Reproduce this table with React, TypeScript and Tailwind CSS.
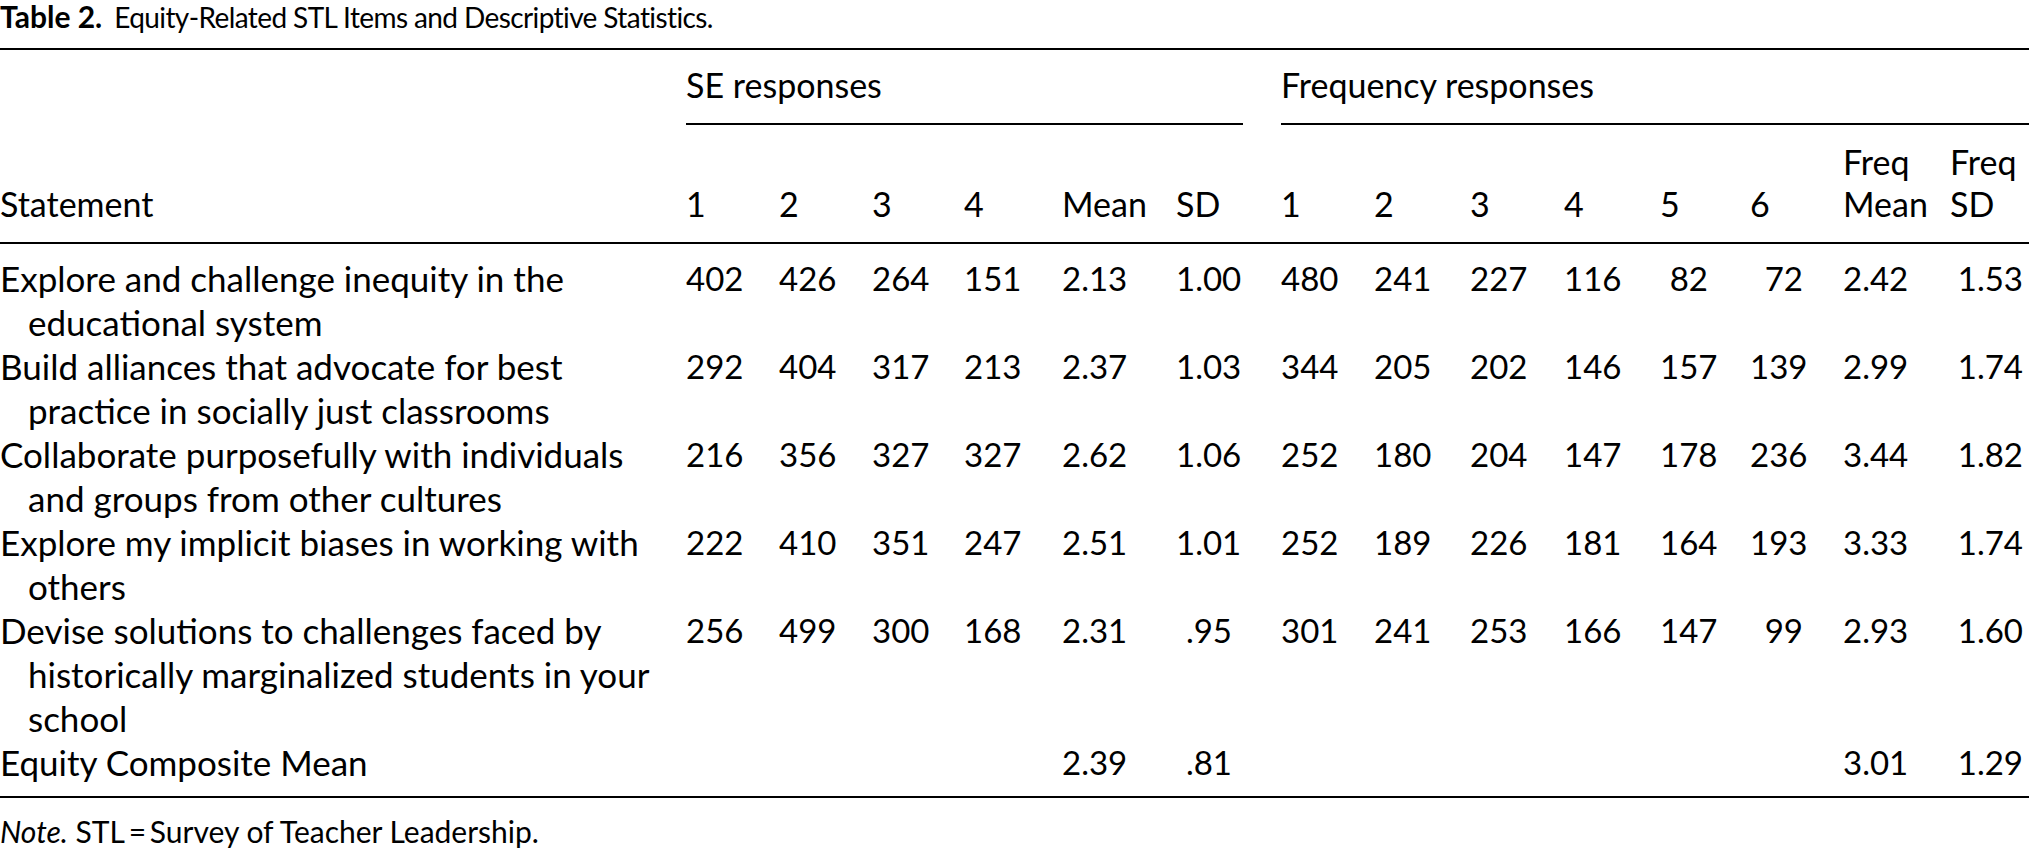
import React from "react";

// Table 2 — equity-related STL items, SE + frequency descriptive stats
type Row = {
  lines: string[];
  se: string[]; // 1..4, mean, sd
  fr: string[]; // 1..6, freq mean, freq sd
};

const ROWS: Row[] = [
  {
    lines: ["Explore and challenge inequity in the", "educational system"],
    se: ["402", "426", "264", "151", "2.13", "1.00"],
    fr: ["480", "241", "227", "116", "82", "72", "2.42", "1.53"],
  },
  {
    lines: ["Build alliances that advocate for best", "practice in socially just classrooms"],
    se: ["292", "404", "317", "213", "2.37", "1.03"],
    fr: ["344", "205", "202", "146", "157", "139", "2.99", "1.74"],
  },
  {
    lines: ["Collaborate purposefully with individuals", "and groups from other cultures"],
    se: ["216", "356", "327", "327", "2.62", "1.06"],
    fr: ["252", "180", "204", "147", "178", "236", "3.44", "1.82"],
  },
  {
    lines: ["Explore my implicit biases in working with", "others"],
    se: ["222", "410", "351", "247", "2.51", "1.01"],
    fr: ["252", "189", "226", "181", "164", "193", "3.33", "1.74"],
  },
  {
    lines: ["Devise solutions to challenges faced by", "historically marginalized students in your", "school"],
    se: ["256", "499", "300", "168", "2.31", ".95"],
    fr: ["301", "241", "253", "166", "147", "99", "2.93", "1.60"],
  },
  {
    lines: ["Equity Composite Mean"],
    se: ["", "", "", "", "2.39", ".81"],
    fr: ["", "", "", "", "", "", "3.01", "1.29"],
  },
];

// right padding per numeric column, so figures line up on the right edge
const PAD = [
  "pr-[38px]", "pr-[38px]", "pr-[37px]", "pr-[42px]", "pr-[54px]", "pr-[49px]",
  "pr-[38px]", "pr-[41px]", "pr-[39px]", "pr-[45px]", "pr-[42px]", "pr-[40px]", "pr-[47px]", "pr-[27px]",
];

const GRID =
  "grid grid-cols-[686px_93px_93px_92px_98px_114px_105px_93px_96px_94px_96px_90px_93px_107px_100px]";

export default function App() {
  return (
    <div
      className="w-[2029px] h-[851px] bg-white text-black overflow-hidden"
      style={{ fontFamily: "Lato, 'Liberation Sans', sans-serif" }}
    >
      {/* Caption */}
      <div className="h-[48px] pt-[1px] text-[28px] leading-[30px] whitespace-nowrap">
        <span className="font-bold text-[30px]">Table 2.</span>
        <span className="ml-[12px] tracking-[-0.6px]">Equity-Related STL Items and Descriptive Statistics.</span>
      </div>

      <div className="border-t-2 border-b-2 border-black text-[34px]">
        {/* Group headers */}
        <div className={`${GRID} leading-[44px]`}>
          <div />
          <div className="col-span-6 pt-[13px]">
            <div className="mr-[38px] pb-[16px] border-b-2 border-black">SE responses</div>
          </div>
          <div className="col-span-8 pt-[13px]">
            <div className="pb-[16px] border-b-2 border-black">Frequency responses</div>
          </div>
        </div>

        {/* Column headers */}
        <div className={`${GRID} items-end leading-[42px] pt-[16px] pb-[17px] border-b-2 border-black`}>
          <div>Statement</div>
          {["1", "2", "3", "4", "Mean", "SD", "1", "2", "3", "4", "5", "6"].map((h, i) => (
            <div key={i}>{h}</div>
          ))}
          <div>
            Freq
            <br />
            Mean
          </div>
          <div className="whitespace-nowrap">
            Freq
            <br />
            SD
          </div>
        </div>

        {/* Body */}
        <div className="pt-[12px] pb-[12px] leading-[44px]">
          {ROWS.map((r, ri) => (
            <div key={ri} className={`${GRID} items-start`}>
              <div className="whitespace-nowrap text-[35px]">
                {r.lines.map((l, li) => (
                  <div key={li} className={li > 0 ? "pl-[28px]" : ""}>
                    {l}
                  </div>
                ))}
              </div>
              {[...r.se, ...r.fr].map((v, i) => (
                <div key={i} className={`text-right text-[33px] ${PAD[i]}`}>
                  {v}
                </div>
              ))}
            </div>
          ))}
        </div>
      </div>

      {/* Note */}
      <div className="mt-[15px] text-[30px] leading-[36px] whitespace-nowrap">
        <span className="italic">Note.</span> STL{"\u2009"}={"\u2009"}Survey of Teacher Leadership.
      </div>
    </div>
  );
}
